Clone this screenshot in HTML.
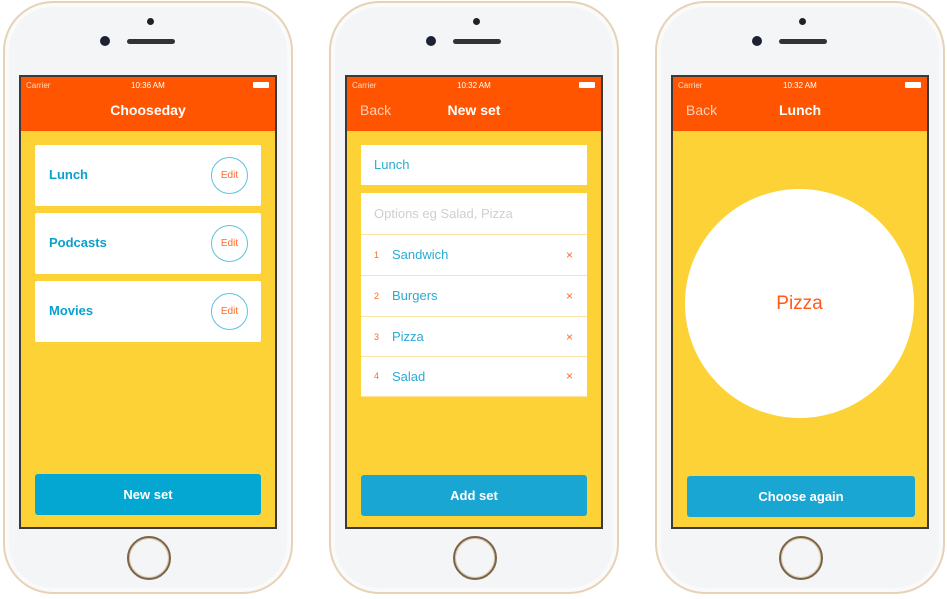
<!DOCTYPE html><html><head><style>
*{margin:0;padding:0;box-sizing:border-box}
body{width:947px;height:599px;background:#fff;position:relative;overflow:hidden;font-family:"Liberation Sans",sans-serif}
.ph{position:absolute;top:1px;width:290px;height:593px;border:2px solid #e6d2b6;border-radius:50px;background:#f4f5f7;box-shadow:inset 0 0 0 4px #fafafa}
.dot{position:absolute;left:142px;top:15px;width:7px;height:7px;border-radius:50%;background:#222}
.cam{position:absolute;left:95px;top:33px;width:10px;height:10px;border-radius:50%;background:#1c2233}
.spk{position:absolute;left:122px;top:36px;width:48px;height:5px;border-radius:3px;background:#333}
.home{position:absolute;left:122px;top:533px;width:44px;height:44px;border-radius:50%;border:2px solid #7a6447;box-shadow:inset 0 0 0 1px #d8c7ad}
.scr{position:absolute;left:14px;top:72px;width:258px;height:454px;border:2px solid #3a3a3c;background:#fdd236;overflow:hidden}
.nav{position:absolute;left:0;top:0;width:254px;height:54px;background:#ff5500;color:#fff}
.st{position:absolute;top:4px;font-size:8px;color:#ffd9c6}
.tt{position:absolute;top:25px;width:100%;text-align:center;font-weight:bold;font-size:14px}
.bk{position:absolute;left:13px;top:25px;font-size:14px;color:#ffd0b8}
.bat{position:absolute;right:6px;top:5px;width:16px;height:6px;background:#fff;border-radius:1px}
.card{position:absolute;left:14px;width:226px;height:61px;background:#fff;border-radius:2px}
.card b{position:absolute;left:14px;top:22px;color:#0aa0cc;font-size:13px}
.edit{position:absolute;right:13px;top:12px;width:37px;height:37px;border:1px solid #5cc3e0;border-radius:50%;color:#ff6a2a;font-size:10px;text-align:center;line-height:35px}
.btn{position:absolute;left:14px;width:226px;height:41px;background:#04a6d2;border-radius:3px;color:#fff;font-weight:bold;font-size:13px;text-align:center;line-height:41px}
.row{position:absolute;left:14px;width:226px;height:40px;background:#fff;font-size:13px;color:#29abd6;line-height:40px}
.row span{position:absolute;top:0}
.n{left:13px;font-size:9px;color:#ff6a2a}
.x{right:14px;color:#ff6a2a;font-size:12px}
.sep{position:absolute;left:14px;width:226px;height:1px;background:#fde2a6}
</style></head><body>

<div class="ph" style="left:3px"><div class="dot"></div><div class="cam"></div><div class="spk"></div><div class="home"></div>
<div class="scr"><div class="nav"><span class="st" style="left:5px">Carrier</span><span class="st" style="left:110px;color:#fff">10:36 AM</span><div class="bat"></div><div class="tt">Chooseday</div></div>
<div class="card" style="top:68px"><b>Lunch</b><div class="edit">Edit</div></div>
<div class="card" style="top:136px"><b>Podcasts</b><div class="edit">Edit</div></div>
<div class="card" style="top:204px"><b>Movies</b><div class="edit">Edit</div></div>
<div class="btn" style="top:397px">New set</div></div></div>

<div class="ph" style="left:329px"><div class="dot"></div><div class="cam"></div><div class="spk"></div><div class="home"></div>
<div class="scr"><div class="nav"><span class="st" style="left:5px">Carrier</span><span class="st" style="left:110px;color:#fff">10:32 AM</span><div class="bat"></div><div class="bk">Back</div><div class="tt">New set</div></div>
<div class="row" style="top:68px"><span style="left:13px">Lunch</span></div>
<div class="row" style="top:116px;height:41px;line-height:41px"><span style="left:13px;color:#cfcfcf">Options eg Salad, Pizza</span></div>
<div class="sep" style="top:157px"></div>
<div class="row" style="top:158px"><span class="n">1</span><span style="left:31px">Sandwich</span><span class="x">×</span></div>
<div class="sep" style="top:198px"></div>
<div class="row" style="top:199px"><span class="n">2</span><span style="left:31px">Burgers</span><span class="x">×</span></div>
<div class="sep" style="top:239px"></div>
<div class="row" style="top:240px"><span class="n">3</span><span style="left:31px">Pizza</span><span class="x">×</span></div>
<div class="sep" style="top:279px"></div>
<div class="row" style="top:280px;height:39px;line-height:39px"><span class="n">4</span><span style="left:31px">Salad</span><span class="x">×</span></div>
<div class="sep" style="top:319px"></div>
<div class="btn" style="top:398px;background:#1aa6d2">Add set</div></div></div>

<div class="ph" style="left:655px"><div class="dot"></div><div class="cam"></div><div class="spk"></div><div class="home"></div>
<div class="scr"><div class="nav"><span class="st" style="left:5px">Carrier</span><span class="st" style="left:110px;color:#fff">10:32 AM</span><div class="bat"></div><div class="bk">Back</div><div class="tt">Lunch</div></div>
<div style="position:absolute;left:12px;top:112px;width:229px;height:229px;border-radius:50%;background:#fff;color:#ff5a1a;font-size:19px;text-align:center;line-height:229px">Pizza</div>
<div class="btn" style="top:399px;width:228px;background:#1aa6d2">Choose again</div></div></div>
</body></html>
